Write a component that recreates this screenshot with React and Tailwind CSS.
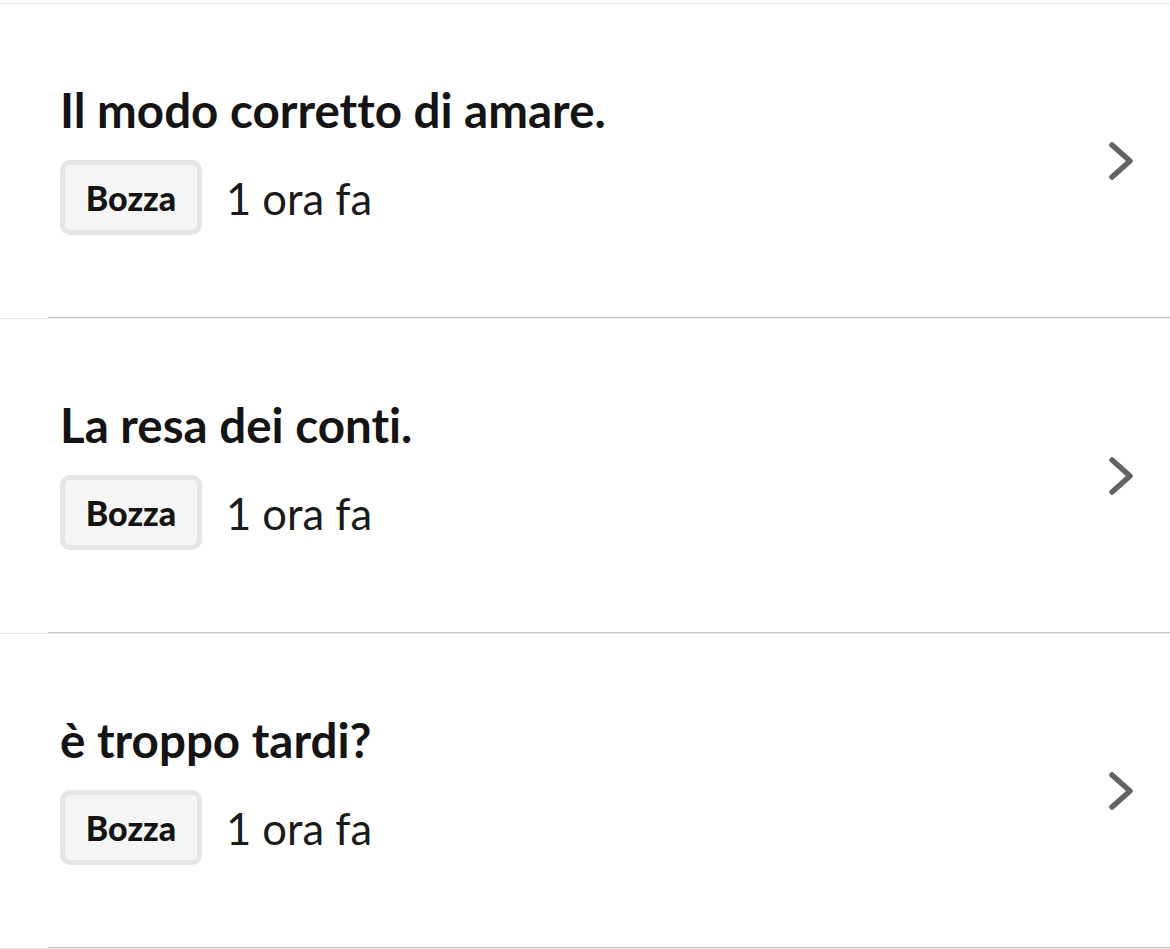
import React from "react";

const items = [
  { title: "Il modo corretto di amare.", status: "Bozza", time: "1 ora fa" },
  { title: "La resa dei conti.", status: "Bozza", time: "1 ora fa" },
  { title: "è troppo tardi?", status: "Bozza", time: "1 ora fa" },
];

function Chevron() {
  return (
    <svg width="28" height="40" viewBox="0 0 28 40" fill="none" aria-hidden="true">
      <polyline
        points="4,4 22,20 4,36"
        stroke="#636363"
        strokeWidth="5.5"
        strokeLinecap="round"
        strokeLinejoin="round"
      />
    </svg>
  );
}

function Row({ item }) {
  return (
    <div>
      <div className="flex h-[313px] items-center pl-[60px] pr-[34px]">
        <div className="flex flex-1 flex-col">
          <div className="text-[47.5px] font-bold leading-none text-[#141414]">
            {item.title}
          </div>
          <div className="mt-[27px] flex items-center gap-[24px]">
            <div className="flex h-[75px] w-[142px] items-center justify-center rounded-[10px] border-[5px] border-[#e5e5e5] bg-[#f5f5f5] text-[34px] font-black leading-none text-[#141414]">
              {item.status}
            </div>
            <div className="mt-[2px] text-[43.5px] leading-none text-[#1a1a1a]">{item.time}</div>
          </div>
        </div>
        <Chevron />
      </div>
      <div className="ml-[48px] h-px bg-[#c8c8c8]" />
      <div className="h-px bg-[#e8e8e8]" />
    </div>
  );
}

export default function App() {
  return (
    <div className="min-h-[949px] bg-white font-['Lato',sans-serif] [font-variant-ligatures:none]">
      <div className="h-[3px]" />
      <div className="h-px bg-[#e3e3e3]" />
      {items.map((item) => (
        <Row key={item.title} item={item} />
      ))}
    </div>
  );
}
